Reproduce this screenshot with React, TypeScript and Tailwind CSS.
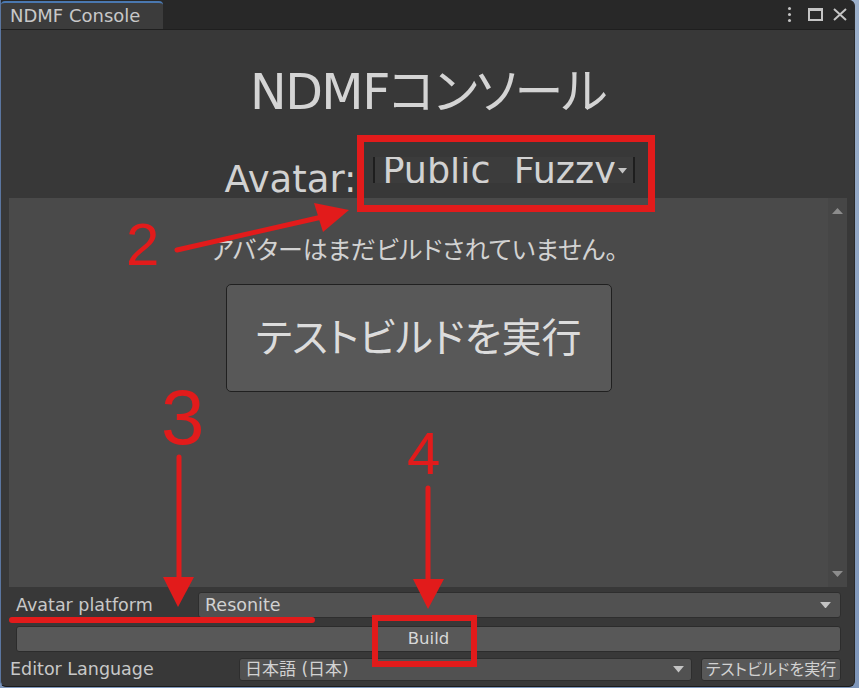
import React from "react";

const RED = "#e21b1b";

const TabBar = () => (
  <div className="flex h-[30px] shrink-0 items-end border-b border-[#1f1f1f] bg-[#282828]">
    <div className="flex h-[28px] w-[162px] items-center rounded-t-[4px] border-t-2 border-[#4a78b0] bg-[#3c3c3c] pl-[9px] text-[18px] leading-none text-[#c8c8c8]">
      NDMF Console
    </div>
    <div className="ml-auto flex h-[29px] items-center pr-[7px]">
      <div className="flex flex-col gap-[3px]">
        <span className="h-[3px] w-[3px] rounded-full bg-[#c4c4c4]" />
        <span className="h-[3px] w-[3px] rounded-full bg-[#c4c4c4]" />
        <span className="h-[3px] w-[3px] rounded-full bg-[#c4c4c4]" />
      </div>
      <div className="ml-[17px] h-[13px] w-[15px] border-2 border-t-[3px] border-[#c4c4c4]" />
      <svg className="ml-[10px]" width="14" height="13" viewBox="0 0 14 13">
        <path d="M1 1 L13 12 M13 1 L1 12" stroke="#c4c4c4" strokeWidth="2" />
      </svg>
    </div>
  </div>
);

const Caret = ({ size = 10 }: { size?: number }) => (
  <svg width={size} height={size / 2 + 1} viewBox="0 0 10 6">
    <path d="M0 0 L10 0 L5 6 Z" fill="#c4c4c4" />
  </svg>
);

const Annotations = () => (
  <>
    <svg
      className="pointer-events-none absolute left-0 top-0"
      width="859"
      height="688"
      viewBox="0 0 859 688"
    >
      <rect x="360.5" y="138.5" width="291" height="70" fill="none" stroke={RED} strokeWidth="7" />
      <rect x="375" y="618" width="99" height="46" fill="none" stroke={RED} strokeWidth="6" />
      <line x1="177" y1="250" x2="322" y2="217" stroke={RED} strokeWidth="5" strokeLinecap="round" />
      <polygon points="314,203 349,210 323,232" fill={RED} />
      <line x1="179" y1="457" x2="179" y2="585" stroke={RED} strokeWidth="5" strokeLinecap="round" />
      <polygon points="163,577 194,577 178,607" fill={RED} />
      <line x1="428" y1="488" x2="428" y2="585" stroke={RED} strokeWidth="5" strokeLinecap="round" />
      <polygon points="413,579 444,579 428,609" fill={RED} />
      <line x1="12" y1="620" x2="312" y2="620" stroke={RED} strokeWidth="6" strokeLinecap="round" />
    </svg>
    <span className="pointer-events-none absolute left-[126px] top-[215px] font-['Liberation_Sans',sans-serif] text-[60px] leading-none text-[#e21b1b]">
      2
    </span>
    <span className="pointer-events-none absolute left-[161px] top-[378px] font-['Liberation_Sans',sans-serif] text-[78px] leading-none text-[#e21b1b]">
      3
    </span>
    <span className="pointer-events-none absolute left-[407px] top-[424px] font-['Liberation_Sans',sans-serif] text-[60px] leading-none text-[#e21b1b]">
      4
    </span>
  </>
);

export default function App() {
  return (
    <div className="relative h-[688px] w-[859px] overflow-hidden bg-gradient-to-b from-[#9db1cc] to-[#7f97bb] font-['DejaVu_Sans','Noto_Sans_CJK_JP',sans-serif] [font-feature-settings:'palt']">
      <div className="flex h-[687px] w-[855px] flex-col overflow-hidden rounded-tr-[6px] rounded-b-[6px] border-b border-l border-r border-l-[#5b76a0] border-b-[#1b1b1b] border-r-[#2a2a2a] bg-[#383838]">
        <TabBar />

        <div className="flex flex-1 flex-col pl-[8px] pr-[7px]">
          <h1 className="pt-[32px] text-center text-[49px] font-normal leading-[62px] tracking-[-1.5px] text-[#d4d4d4]">
            NDMFコンソール
          </h1>

          <div className="mt-[33px] flex h-[41px] items-start justify-center pl-[4px]">
            <span className="mt-[4px] text-[37px] leading-[38px] text-[#d2d2d2]">Avatar:</span>
            <div className="ml-[17px] flex h-[26px] w-[262px] items-start overflow-hidden border-x-2 border-[#1e1e1e] bg-[#3c3c3c] pl-[7px]">
              <span className="shrink-0 whitespace-pre text-[36.5px] leading-[28px] text-[#d2d2d2]">Public  Fuzzy</span>
              <span className="ml-[2px] mt-[11px] shrink-0">
                <Caret size={9} />
              </span>
            </div>
          </div>

          <div className="flex h-[389px] bg-[#4a4a4a]">
            <div className="flex flex-1 flex-col items-center">
              <p className="mr-[9px] mt-[38px] text-[25px] leading-[30px] text-[#d2d2d2]">
                アバターはまだビルドされていません。
              </p>
              <button className="mt-[18px] flex h-[108px] w-[386px] items-center justify-center rounded-[5px] border border-[#202020] bg-[#585858] text-[40px] text-[#dcdcdc]">
                テストビルドを実行
              </button>
            </div>
            <div className="flex w-[19px] flex-col items-center justify-between bg-[#464646] py-[10px]">
              <svg width="11" height="6" viewBox="0 0 11 6">
                <path d="M0 6 L5.5 0 L11 6 Z" fill="#8c8c8c" />
              </svg>
              <svg width="11" height="6" viewBox="0 0 11 6">
                <path d="M0 0 L5.5 6 L11 0 Z" fill="#8c8c8c" />
              </svg>
            </div>
          </div>

          <div className="mr-[6px] mt-[5px] flex h-[26px] items-center">
            <span className="w-[189px] pl-[7px] text-[17.5px] text-[#c8c8c8]">Avatar platform</span>
            <div className="flex h-[26px] flex-1 items-center rounded-[3px] border border-[#2e2e2e] bg-[#515151] pl-[6px] pr-[9px] text-[17.5px] text-[#d2d2d2]">
              Resonite
              <span className="ml-auto">
                <Caret size={11} />
              </span>
            </div>
          </div>

          <button className="ml-[7px] mr-[6px] mt-[8px] flex h-[26px] items-center justify-center rounded-[3px] border border-[#2c2c2c] bg-[#585858] text-[16.5px] text-[#d8d8d8]">
            Build
          </button>

          <div className="mt-[6px] flex h-[23px] items-center">
            <span className="w-[230px] pl-[1px] text-[17.5px] text-[#c8c8c8]">Editor Language</span>
            <div className="flex h-[23px] w-[453px] items-center rounded-[3px] border border-[#2e2e2e] bg-[#515151] pl-[5px] pr-[7px] text-[17px] text-[#d2d2d2]">
              日本語 (日本)
              <span className="ml-auto">
                <Caret size={11} />
              </span>
            </div>
            <button className="ml-[9px] flex h-[23px] w-[140px] items-center justify-center rounded-[3px] border border-[#2c2c2c] bg-[#585858] text-[16px] text-[#d2d2d2]">
              テストビルドを実行
            </button>
          </div>
        </div>
      </div>
      <Annotations />
    </div>
  );
}
